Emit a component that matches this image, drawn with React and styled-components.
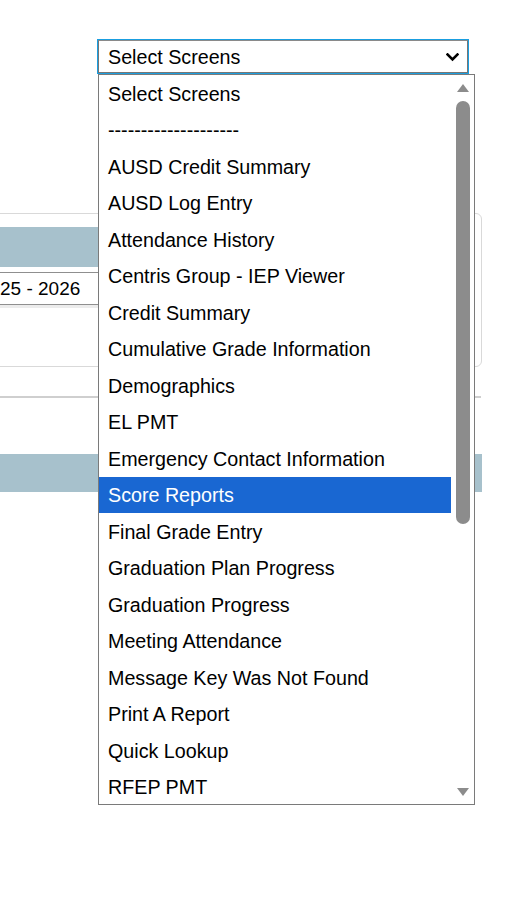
import React from "react";
import styled, { createGlobalStyle } from "styled-components";

const Global = createGlobalStyle`
  html, body { margin: 0; padding: 0; background: #fff; }
  body { font-family: "Liberation Sans", Arial, sans-serif; color: #000; }
  #root { width: 509px; height: 916px; overflow: hidden; position: relative; }
`;

const Page = styled.div`
  position: relative;
  width: 509px;
  height: 916px;
  overflow: hidden;
`;

const SelectRow = styled.div`
  padding: 39px 0 0 97px;
`;

const SelectBox = styled.div`
  box-sizing: border-box;
  width: 372px;
  height: 35px;
  border: 1px solid #1a9ee0;
  padding: 0;
`;

const SelectInner = styled.div`
  box-sizing: border-box;
  height: 100%;
  border: 1px solid #767676;
  border-top-color: #8a8a8a;
  display: flex;
  align-items: center;
  justify-content: space-between;
  padding: 1px 8px 0 9px;
  font-size: 19.7px;
`;

const Card = styled.div`
  box-sizing: border-box;
  margin: 139px 27px 0 -12px;
  height: 154px;
  border: 1px solid #d9d9d9;
  border-radius: 6px;
  padding-top: 13px;
`;

const HeaderBand = styled.div`
  height: 40px;
  background: #a7c1cc;
  margin-right: 12px;
`;

const YearInput = styled.div`
  box-sizing: border-box;
  margin: 5px 30px 0 0;
  height: 33px;
  border: 1px solid #8f8f8f;
  border-left: none;
  display: flex;
  align-items: center;
  padding: 1px 0 0 11px;
  font-size: 19px;
  box-shadow: 0 3px 0 #ececec;
`;

const Rule = styled.div`
  margin: 29px 28px 0 0;
  height: 2px;
  background: #cfcfcf;
`;

const BottomBand = styled.div`
  margin: 56px 27px 0 0;
  height: 38px;
  background: #a7c1cc;
`;

const List = styled.div`
  position: absolute;
  top: 74px;
  left: 98px;
  box-sizing: border-box;
  width: 377px;
  height: 731px;
  border: 1px solid #7a7a7a;
  background: #fff;
  display: flex;
`;

const Items = styled.div`
  flex: 1;
  display: flex;
  flex-direction: column;
`;

const Item = styled.div`
  box-sizing: border-box;
  height: 36.5px;
  flex: none;
  display: flex;
  align-items: center;
  padding: 2px 0 0 9px;
  font-size: 19.7px;
  white-space: nowrap;
  background: ${(p) => (p.$selected ? "#1967d2" : "transparent")};
  color: ${(p) => (p.$selected ? "#fff" : "#000")};
`;

const Scrollbar = styled.div`
  width: 23px;
  flex: none;
  display: flex;
  flex-direction: column;
  align-items: center;
  background: #fff;
`;

const ArrowBox = styled.div`
  height: 26px;
  width: 100%;
  display: flex;
  align-items: ${(p) => (p.$down ? "flex-end" : "flex-start")};
  justify-content: center;
  padding: ${(p) => (p.$down ? "0 0 7px" : "8px 0 0")};
  box-sizing: border-box;
  flex: none;
`;

const Thumb = styled.div`
  width: 14px;
  height: 423px;
  border-radius: 7px;
  background: #8c8c8c;
  flex: none;
`;

const Spacer = styled.div`
  flex: 1;
`;

const items = [
  "Select Screens",
  "--------------------",
  "AUSD Credit Summary",
  "AUSD Log Entry",
  "Attendance History",
  "Centris Group - IEP Viewer",
  "Credit Summary",
  "Cumulative Grade Information",
  "Demographics",
  "EL PMT",
  "Emergency Contact Information",
  "Score Reports",
  "Final Grade Entry",
  "Graduation Plan Progress",
  "Graduation Progress",
  "Meeting Attendance",
  "Message Key Was Not Found",
  "Print A Report",
  "Quick Lookup",
  "RFEP PMT",
];

const Chevron = () => (
  <svg width="13" height="9" viewBox="0 0 13 9">
    <path d="M1.5 1.5 L6.5 6.5 L11.5 1.5" fill="none" stroke="#000" strokeWidth="2.6" strokeLinecap="square" />
  </svg>
);

const Triangle = ({ down }) => (
  <svg width="14" height="10" viewBox="0 0 14 10">
    {down ? (
      <path d="M1 1 L13 1 L7 9 Z" fill="#8c8c8c" />
    ) : (
      <path d="M1 9 L13 9 L7 1 Z" fill="#8c8c8c" />
    )}
  </svg>
);

export default function App() {
  return (
    <Page>
      <Global />
      <SelectRow>
        <SelectBox>
          <SelectInner>
            <span>Select Screens</span>
            <Chevron />
          </SelectInner>
        </SelectBox>
      </SelectRow>
      <Card>
        <HeaderBand />
        <YearInput>25 - 2026</YearInput>
      </Card>
      <Rule />
      <BottomBand />
      <List>
        <Items>
          {items.map((t) => (
            <Item key={t} $selected={t === "Score Reports"}>
              {t}
            </Item>
          ))}
        </Items>
        <Scrollbar>
          <ArrowBox>
            <Triangle />
          </ArrowBox>
          <Thumb />
          <Spacer />
          <ArrowBox $down>
            <Triangle down />
          </ArrowBox>
        </Scrollbar>
      </List>
    </Page>
  );
}
